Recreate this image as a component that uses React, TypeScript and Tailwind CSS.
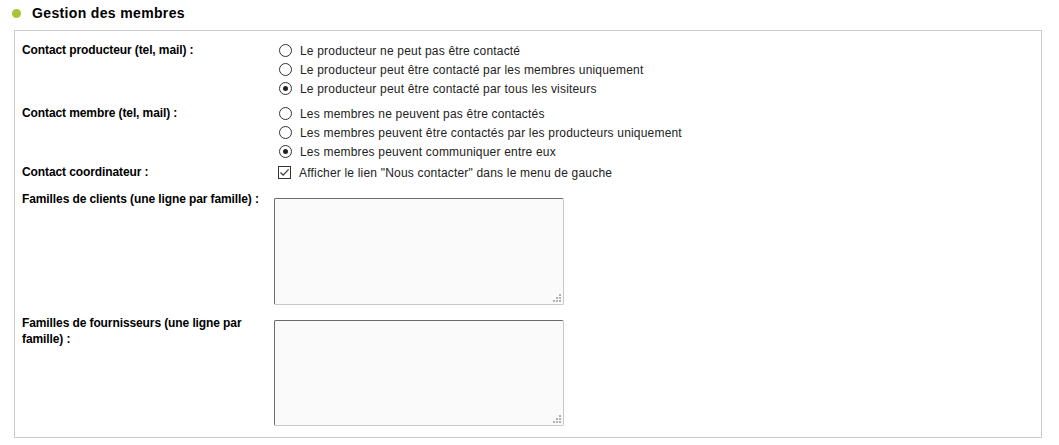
import { ReactNode } from "react";

interface OptionProps {
  checked?: boolean;
  children: ReactNode;
}

function Radio({ checked, children }: OptionProps) {
  return (
    <div className="flex h-[19px] items-center">
      <span className="ml-[5px] flex h-[13px] w-[13px] items-center justify-center rounded-full border border-[#333] bg-white">
        {checked && <span className="h-[5px] w-[5px] rounded-full bg-[#222]" />}
      </span>
      <span className="ml-[8px] tracking-[0.19px] text-[#222]">{children}</span>
    </div>
  );
}

function Checkbox({ checked, children }: OptionProps) {
  return (
    <div className="flex h-[19px] items-center">
      <span className="ml-[4px] flex h-[13px] w-[13px] items-center justify-center border border-[#333] bg-white">
        {checked && (
          <svg width="11" height="11" viewBox="0 0 11 11">
            <path d="M1.5 5.5 L4.2 8.2 L9.6 2.4" fill="none" stroke="#333" strokeWidth="1.2" />
          </svg>
        )}
      </span>
      <span className="ml-[8px] tracking-[0.19px] text-[#222]">{children}</span>
    </div>
  );
}

function TextArea({ height }: { height: string }) {
  return (
    <div className={`relative w-[290px] ${height}`}>
      <textarea className="h-full w-full resize-none rounded-[2px] border border-t-[#6b6b6b] border-l-[#6b6b6b] border-r-[#c8c8c8] border-b-[#c8c8c8] bg-[#fafafa] outline-none" />
      <svg className="absolute bottom-[3px] right-[3px]" width="8" height="8" viewBox="0 0 8 8">
        <rect x="6" y="0" width="2" height="2" fill="#b0b0b0" />
        <rect x="3" y="3" width="2" height="2" fill="#b0b0b0" />
        <rect x="6" y="3" width="2" height="2" fill="#b0b0b0" />
        <rect x="0" y="6" width="2" height="2" fill="#b0b0b0" />
        <rect x="3" y="6" width="2" height="2" fill="#b0b0b0" />
        <rect x="6" y="6" width="2" height="2" fill="#b0b0b0" />
      </svg>
    </div>
  );
}

function Label({ children, className = "" }: { children: ReactNode; className?: string }) {
  return <div className={`w-[244px] shrink-0 font-bold tracking-[-0.1px] text-black ${className}`}>{children}</div>;
}

function App() {
  return (
    <div className="h-[445px] w-[1059px] bg-white text-[12px] font-['Liberation_Sans',Arial,sans-serif]">
      <div className="flex h-[26px] items-center pl-[12px]">
        <span className="h-[9px] w-[9px] rounded-full bg-[#a6c638]" />
        <h2 className="ml-[11px] text-[14px] font-bold tracking-[0.35px] text-black">Gestion des membres</h2>
      </div>

      <div className="mt-[4px] ml-[14px] h-[408px] w-[1028px] border border-[#cccccc] pt-[10px] pl-[7px]">
        <div className="flex">
          <Label className="leading-[19px]">Contact producteur (tel, mail) :</Label>
          <div className="ml-[8px]">
            <Radio>Le producteur ne peut pas être contacté</Radio>
            <Radio>Le producteur peut être contacté par les membres uniquement</Radio>
            <Radio checked>Le producteur peut être contacté par tous les visiteurs</Radio>
          </div>
        </div>

        <div className="mt-[6px] flex">
          <Label className="leading-[19px]">Contact membre (tel, mail) :</Label>
          <div className="ml-[8px]">
            <Radio>Les membres ne peuvent pas être contactés</Radio>
            <Radio>Les membres peuvent être contactés par les producteurs uniquement</Radio>
            <Radio checked>Les membres peuvent communiquer entre eux</Radio>
          </div>
        </div>

        <div className="mt-[2px] flex">
          <Label className="leading-[19px]">Contact coordinateur :</Label>
          <div className="ml-[8px]">
            <Checkbox checked>Afficher le lien "Nous contacter" dans le menu de gauche</Checkbox>
          </div>
        </div>

        <div className="mt-[9px] flex">
          <Label className="leading-[16px]">Familles de clients (une ligne par famille)&nbsp;:</Label>
          <div className="ml-[8px] mt-[7px]">
            <TextArea height="h-[107px]" />
          </div>
        </div>

        <div className="mt-[10px] flex">
          <Label className="leading-[16px]">Familles de fournisseurs (une ligne par famille)&nbsp;:</Label>
          <div className="ml-[8px] mt-[5px]">
            <TextArea height="h-[106px]" />
          </div>
        </div>
      </div>
    </div>
  );
}

export default App;
